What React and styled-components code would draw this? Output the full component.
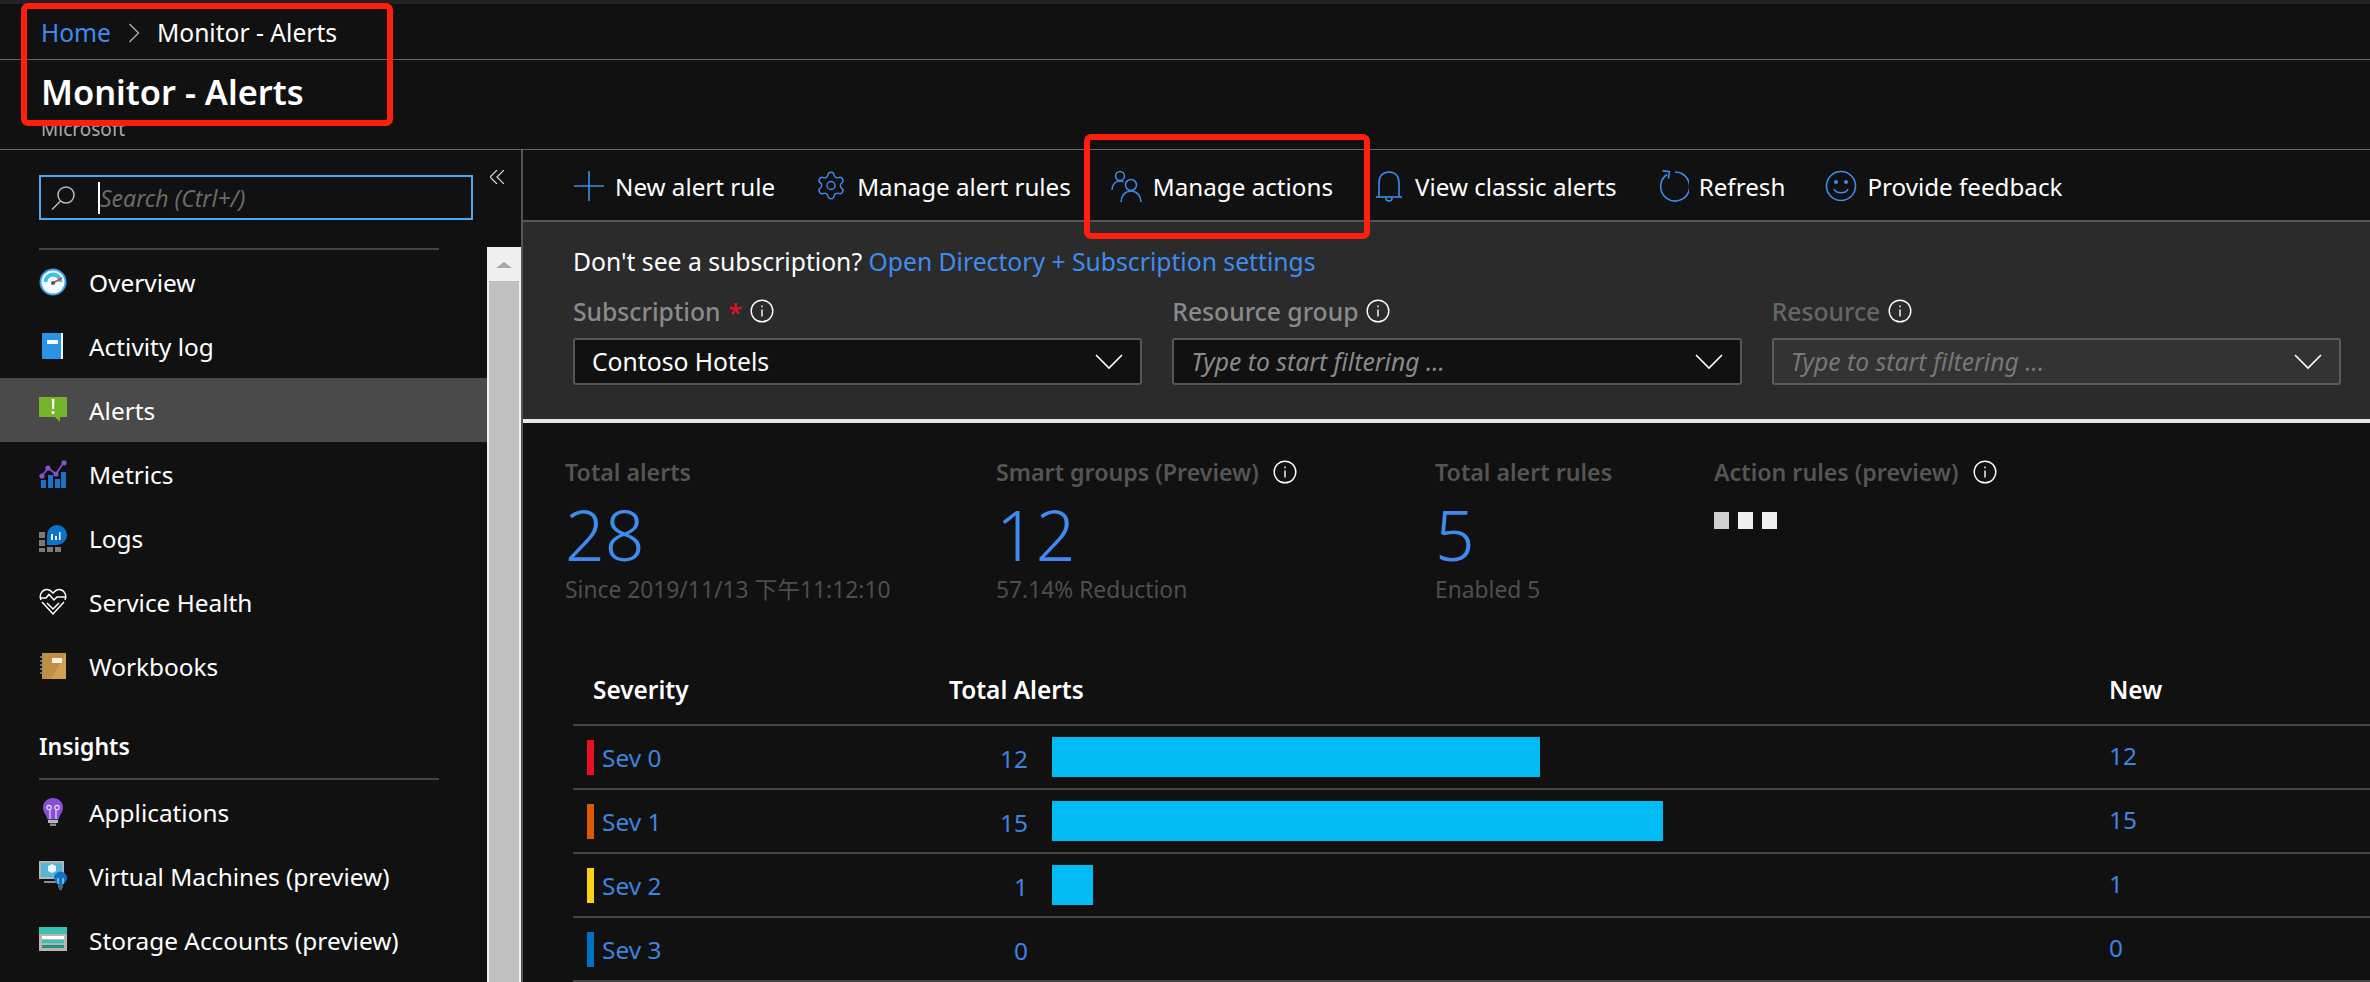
import styled, { createGlobalStyle } from 'styled-components';
import { Settings } from 'lucide-react';

const FONT = `"Noto Sans", "Noto Sans CJK SC", sans-serif`;

const navTop = ['Overview', 'Activity log', 'Alerts', 'Metrics', 'Logs', 'Service Health', 'Workbooks'];
const navInsights = ['Applications', 'Virtual Machines (preview)', 'Storage Accounts (preview)'];

const severities = [
  { name: 'Sev 0', color: '#e81123', total: 12, isNew: 12 },
  { name: 'Sev 1', color: '#da5b00', total: 15, isNew: 15 },
  { name: 'Sev 2', color: '#fcd116', total: 1, isNew: 1 },
  { name: 'Sev 3', color: '#0072c6', total: 0, isNew: 0 },
];

function OverviewIcon() {
  return (
    <svg width="28" height="28" viewBox="0 0 28 28">
      <circle cx="14" cy="14" r="13.5" fill="#3aa0e8" />
      <circle cx="14" cy="14" r="11.5" fill="#f4fbff" />
      <path d="M4.5 14a9.5 9.5 0 0 1 19 0h-4a5.5 5.5 0 0 0-11 0z" fill="#35c3e8" />
      <path d="M14 15l9-5" stroke="#e0393e" strokeWidth="1.6" />
      <circle cx="14" cy="15" r="2" fill="#555" />
    </svg>
  );
}

function BookIcon() {
  return (
    <svg width="28" height="28" viewBox="0 0 28 28">
      <path d="M5 1h19v26H5z" fill="#f4fbff" />
      <path d="M3 2a1 1 0 0 1 1-1h18v26H4a1 1 0 0 1-1-1z" fill="#2a93e6" />
      <path d="M8 8h11v4H8z" fill="#fff" />
    </svg>
  );
}

function AlertIcon() {
  return (
    <svg width="28" height="28" viewBox="0 0 28 28">
      <path d="M0 0h28v20h-7v5l-5-5H0z" transform="translate(0 1)" fill="#74b52a" />
      <path d="M12.8 3h2.6l-.4 10h-1.8z" fill="#fff" />
      <circle cx="14" cy="16.5" r="1.5" fill="#fff" />
    </svg>
  );
}

function MetricsIcon() {
  return (
    <svg width="28" height="28" viewBox="0 0 28 28">
      <path d="M2 21h5v8H2zM9 16h5v13H9zM16 20h5v9h-5zM22 13h5v16h-5z" fill="#1a73c7" transform="translate(0 -1)" />
      <path d="M3 16l6-8 8 6 8-12" fill="none" stroke="#8a4fd8" strokeWidth="1.6" />
      <circle cx="3" cy="16" r="2.6" fill="#8a4fd8" />
      <circle cx="9" cy="8" r="2.6" fill="#8a4fd8" />
      <circle cx="17" cy="14" r="2.6" fill="#8a4fd8" />
      <circle cx="25" cy="2.8" r="2.6" fill="#8a4fd8" />
    </svg>
  );
}

function LogsIcon() {
  return (
    <svg width="28" height="28" viewBox="0 0 28 28">
      <path d="M0 8h6v6H0zM0 16h6v6H0zM0 24h6v4H0zM8 23h6v5H8zM16 23h6v5h-6z" fill="#7a7a7a" />
      <path d="M8 11a10 10 0 1 1 10 10H8z" fill="#0f72c4" />
      <path d="M12 10h2v6h-2zM16 12h2v4h-2zM20 8h1.6v8H20z" fill="#e8f4ff" />
    </svg>
  );
}

function HeartIcon() {
  return (
    <svg width="28" height="28" viewBox="0 0 28 28" fill="none" stroke="#fff" strokeWidth="1.5">
      <path d="M2 12C-.5 6 4 1 8.500 1.500c2.500.2 4 1.800 5.500 3.500 1.500-1.700 3-3.300 5.500-3.500C24 1 28.500 6 26 12" />
      <path d="M1 10h6l3-3.500 5 5.500 3-3h9" />
      <path d="M3 14l11 12 11-12M8 15l6 6 6-6" />
    </svg>
  );
}

function WorkbookIcon() {
  return (
    <svg width="28" height="28" viewBox="0 0 28 28">
      <path d="M3 1h24v26H3z" fill="#c08f45" />
      <path d="M27 1v26H12z" fill="#d19e52" />
      <path d="M13 6h10v5H13z" fill="#f5f0e6" />
      <path d="M1 5h4M1 9h4M1 13h4M1 17h4M1 21h4" stroke="#8c8c8c" strokeWidth="1.3" />
    </svg>
  );
}

function BulbIcon() {
  return (
    <svg width="28" height="28" viewBox="0 0 28 28">
      <path d="M14 0c5.500 0 10 4 10 9.500 0 5-3.500 7-4.500 12h-11C7.500 16.500 4 14.500 4 9.500 4 4 8.500 0 14 0z" fill="#8a4fd8" />
      <path d="M9 22h10v3H9z" fill="#b5b5b5" />
      <path d="M11 25.500h6V28h-6z" fill="#888" />
      <path d="M11 21v-9M17 21v-9" stroke="#e8dcff" strokeWidth="1.2" />
      <circle cx="10" cy="9.500" r="2.200" fill="none" stroke="#e8dcff" strokeWidth="1.2" />
      <circle cx="18" cy="9.500" r="2.200" fill="none" stroke="#e8dcff" strokeWidth="1.2" />
    </svg>
  );
}

function VmIcon() {
  return (
    <svg width="28" height="30" viewBox="0 0 28 30">
      <path d="M0 0h25v18H0z" fill="#b5b5b5" />
      <path d="M2 2h21v14H2z" fill="#59b4d9" />
      <path d="M9 5l4-2 4 2v5l-4 2-4-2z" fill="#e8f7fd" />
      <path d="M5 20h15v2H5z" fill="#8f8f8f" />
      <circle cx="21.500" cy="17" r="6.500" fill="#0f72c4" />
      <path d="M19 21v4h5v-4z" fill="#0f72c4" />
      <path d="M19 17v6M24 17v6" stroke="#d9eeff" strokeWidth="1" />
      <path d="M19 26h5M20 28h3" stroke="#777" strokeWidth="1.4" />
    </svg>
  );
}

function StorageIcon() {
  return (
    <svg width="28" height="28" viewBox="0 0 28 28">
      <path d="M0 2h28v23H0z" fill="#b5b5b5" />
      <path d="M0 1h28v7H0z" fill="#37c2b1" />
      <path d="M3 10h22v3H3z" fill="#fff" />
      <path d="M3 14h22v3H3z" fill="#37c2b1" />
      <path d="M3 19h22v3H3z" fill="#268f84" />
    </svg>
  );
}

const navIcons = {
  Overview: OverviewIcon,
  'Activity log': BookIcon,
  Alerts: AlertIcon,
  Metrics: MetricsIcon,
  Logs: LogsIcon,
  'Service Health': HeartIcon,
  Workbooks: WorkbookIcon,
  Applications: BulbIcon,
  'Virtual Machines (preview)': VmIcon,
  'Storage Accounts (preview)': StorageIcon,
};

function PlusIcon() {
  return (
    <svg width="32" height="32" viewBox="0 0 32 32" stroke="#3f8cf0" strokeWidth="1.6">
      <path d="M16 1v30M1 16h30" />
    </svg>
  );
}

function PeopleIcon() {
  return (
    <svg width="32" height="32" viewBox="0 0 32 32" fill="none" stroke="#3f8cf0" strokeWidth="1.5">
      <circle cx="9" cy="6" r="4.500" />
      <path d="M1 20c0-5 3-9 8-9 1.500 0 2.500.3 3.500 1" />
      <circle cx="20" cy="15" r="5.500" />
      <path d="M10 32c0-6 4-11 10-11s10 5 10 11" />
    </svg>
  );
}

function BellIcon() {
  return (
    <svg width="32" height="32" viewBox="0 0 32 32" fill="none" stroke="#3f8cf0" strokeWidth="1.6">
      <path d="M6 26V13C6 6 10 2 16 2s10 4 10 11v13" />
      <path d="M3 27h26" />
      <path d="M13 28a3 3 0 0 0 6 0" />
    </svg>
  );
}

function RefreshIcon() {
  return (
    <svg width="32" height="32" viewBox="0 0 32 32" fill="none" stroke="#3f8cf0" strokeWidth="1.6">
      <path d="M10 4.500A14.500 14.500 0 1 0 18 2" />
      <path d="M5 1h7v7" transform="rotate(8 8 4)" />
    </svg>
  );
}

function SmileIcon() {
  return (
    <svg width="32" height="32" viewBox="0 0 32 32" fill="none" stroke="#3f8cf0" strokeWidth="1.6">
      <circle cx="16" cy="16" r="14.500" />
      <circle cx="11" cy="12" r="1.200" fill="#3f8cf0" />
      <circle cx="21" cy="12" r="1.200" fill="#3f8cf0" />
      <path d="M9 19c2 5 12 5 14 0" />
    </svg>
  );
}

function InfoIcon() {
  return (
    <svg width="24" height="24" viewBox="0 0 24 24" fill="none" stroke="#fff" strokeWidth="1.4">
      <circle cx="12" cy="12" r="10.800" />
      <path d="M12 10.500v7" />
      <path d="M12 6.500v1.800" />
    </svg>
  );
}

function Chevron() {
  return (
    <svg width="28" height="16" viewBox="0 0 28 16" fill="none" stroke="#fff" strokeWidth="1.6">
      <path d="M1 1l13 13L27 1" />
    </svg>
  );
}

const toolbarItems = [
  { label: 'New alert rule', Icon: PlusIcon },
  { label: 'Manage alert rules', Icon: () => <Settings size={37} strokeWidth={1.05} color="#3f8cf0" /> },
  { label: 'Manage actions', Icon: PeopleIcon },
  { label: 'View classic alerts', Icon: BellIcon },
  { label: 'Refresh', Icon: RefreshIcon },
  { label: 'Provide feedback', Icon: SmileIcon },
];

function NavItem({ label }) {
  const Icon = navIcons[label];
  return (
    <NavRow $active={label === 'Alerts'}>
      <NavIcon>
        <Icon />
      </NavIcon>
      <span>{label}</span>
    </NavRow>
  );
}

function Filter({ label, value, placeholder, required, disabled }) {
  return (
    <FilterField>
      <FilterLabel $disabled={disabled}>
        {label}
        {required && <Star>*</Star>}
        <InfoIcon />
      </FilterLabel>
      <Select $disabled={disabled}>
        {value ? <span>{value}</span> : <Placeholder $disabled={disabled}>{placeholder}</Placeholder>}
        <Chevron />
      </Select>
    </FilterField>
  );
}

function Stat({ label, value, note, info, width, children }) {
  return (
    <StatBlock $width={width}>
      <StatLabel>
        {label}
        {info && <InfoIcon />}
      </StatLabel>
      {value && <StatValue>{value}</StatValue>}
      {note && <StatNote>{note}</StatNote>}
      {children}
    </StatBlock>
  );
}

export default function App() {
  return (
    <Page>
      <GlobalStyle />
      <TopStrip />
      <Breadcrumb>
        <HomeLink>Home</HomeLink>
        <svg width="12" height="20" viewBox="0 0 12 20" fill="none" stroke="#aaa" strokeWidth="1.4">
          <path d="M1.500 1l9 9-9 9" />
        </svg>
        <span>Monitor - Alerts</span>
      </Breadcrumb>
      <TitleBlock>
        <Title>Monitor - Alerts</Title>
        <Owner>Microsoft</Owner>
      </TitleBlock>

      <Body>
        <Sidebar>
          <Nav>
            <SearchBox>
              <svg width="24" height="24" viewBox="0 0 24 24" fill="none" stroke="#bbb" strokeWidth="1.5">
                <circle cx="15" cy="9" r="8" />
                <path d="M9.500 15L1 23.500" />
              </svg>
              <Caret />
              <SearchHint>Search (Ctrl+/)</SearchHint>
            </SearchBox>
            <Rule $top={28} />
            {navTop.map((label) => (
              <NavItem key={label} label={label} />
            ))}
            <SectionTitle>Insights</SectionTitle>
            <Rule />
            {navInsights.map((label) => (
              <NavItem key={label} label={label} />
            ))}
          </Nav>
          <Rail>
            <Collapse>
              <svg width="14" height="14" viewBox="0 0 14 14" fill="none" stroke="#ddd" strokeWidth="1.2">
                <path d="M7 0L0 7l7 7M14 0L7 7l7 7" />
              </svg>
            </Collapse>
            <Track>
              <TrackArrow />
              <Thumb />
            </Track>
          </Rail>
        </Sidebar>

        <Main>
          <Toolbar>
            {toolbarItems.map(({ label, Icon }) => (
              <ToolButton key={label}>
                <ToolIcon>
                  <Icon />
                </ToolIcon>
                {label}
              </ToolButton>
            ))}
          </Toolbar>

          <FilterPanel>
            <Notice>
              Don't see a subscription? <BlueLink>Open Directory + Subscription settings</BlueLink>
            </Notice>
            <FilterRow>
              <Filter label="Subscription" required value="Contoso Hotels" />
              <Filter label="Resource group" placeholder="Type to start filtering ..." />
              <Filter label="Resource" disabled placeholder="Type to start filtering ..." />
            </FilterRow>
          </FilterPanel>

          <Stats>
            <Stat label="Total alerts" value="28" note="Since 2019/11/13 下午11:12:10" width={431} />
            <Stat label="Smart groups (Preview)" value="12" note="57.14% Reduction" info width={439} />
            <Stat label="Total alert rules" value="5" note="Enabled 5" width={279} />
            <Stat label="Action rules (preview)" info>
              <Dots>
                <Dot $shade="#d0d0d0" />
                <Dot />
                <Dot />
              </Dots>
            </Stat>
          </Stats>

          <Table>
            <HeadRow>
              <HeadCell $pad={20}>Severity</HeadCell>
              <HeadCell>Total Alerts</HeadCell>
              <HeadCell>New</HeadCell>
            </HeadRow>
            {severities.map((sev) => (
              <Row key={sev.name}>
                <SevCell>
                  <SevMark $color={sev.color} />
                  <SevName>{sev.name}</SevName>
                </SevCell>
                <TotalCell>
                  <Count>{sev.total}</Count>
                  {sev.total > 0 && <Bar style={{ width: sev.total * 40.7 }} />}
                </TotalCell>
                <NewCell>{sev.isNew}</NewCell>
              </Row>
            ))}
          </Table>
        </Main>
      </Body>

      <Callout $left={21} $top={3} $width={372} $height={123} />
      <Callout $left={1084} $top={134} $width={286} $height={105} />
    </Page>
  );
}

const GlobalStyle = createGlobalStyle`
  html, body {
    margin: 0;
    padding: 0;
    background: #111;
  }
`;

const Page = styled.div`
  position: relative;
  width: 2370px;
  height: 982px;
  overflow: hidden;
  background: #111;
  color: #fff;
  font-family: ${FONT};
  font-size: 24.4px;
`;

const TopStrip = styled.div`
  height: 4px;
  background: #222;
`;

const Breadcrumb = styled.div`
  height: 53px;
  padding: 2px 0 0 41px;
  display: flex;
  align-items: center;
  gap: 17px;
  border-bottom: 1px solid #666;
  font-size: 24.6px;
`;

const HomeLink = styled.span`
  color: #3f8cf0;
`;

const TitleBlock = styled.div`
  height: 89px;
  padding-left: 41px;
  border-bottom: 1px solid #666;
  overflow: hidden;
`;

const Title = styled.div`
  height: 61px;
  line-height: 64px;
  font-size: 34.4px;
  font-weight: 600;
`;

const Owner = styled.div`
  font-size: 19px;
  line-height: 16px;
  color: #aaa;
`;

const Body = styled.div`
  display: flex;
  height: 832px;
`;

const Sidebar = styled.aside`
  width: 521px;
  display: flex;
  flex: none;
  border-right: 2px solid #555;
`;

const Nav = styled.nav`
  width: 487px;
  padding-top: 25px;
`;

const SearchBox = styled.div`
  box-sizing: border-box;
  width: 434px;
  height: 45px;
  margin-left: 39px;
  display: flex;
  align-items: center;
  padding-left: 10px;
  border: 2px solid #4aa8f5;
`;

const Caret = styled.div`
  width: 2px;
  height: 32px;
  margin-left: 23px;
  background: #fff;
`;

const SearchHint = styled.span`
  font-style: italic;
  color: #6a6a6a;
  font-size: 23px;
`;

const Rule = styled.div`
  width: 400px;
  height: 2px;
  margin: ${(p) => p.$top || 0}px 0 0 39px;
  background: #444;
`;

const NavRow = styled.div`
  height: 64px;
  display: flex;
  align-items: center;
  padding-left: 39px;
  background: ${(p) => (p.$active ? '#4a4a4a' : 'transparent')};
`;

const NavIcon = styled.div`
  width: 28px;
  height: 30px;
  margin-right: 22px;
  display: flex;
  align-items: center;
  justify-content: center;
`;

const SectionTitle = styled.div`
  height: 80px;
  padding: 32px 0 0 39px;
  box-sizing: border-box;
  font-size: 23px;
  font-weight: 600;
`;

const Rail = styled.div`
  width: 34px;
  display: flex;
  flex-direction: column;
`;

const Collapse = styled.div`
  height: 97px;
  padding: 20px 0 0 3px;
  box-sizing: border-box;

  svg {
    display: block;
  }
`;

const Track = styled.div`
  flex: 1;
  background: #f0f0f0;
  display: flex;
  flex-direction: column;
  align-items: center;
`;

const TrackArrow = styled.div`
  margin: 15px 0 13px;
  border-left: 8px solid transparent;
  border-right: 8px solid transparent;
  border-bottom: 6px solid #a6a6a6;
`;

const Thumb = styled.div`
  width: 30px;
  flex: 1;
  background: #c0c0c0;
`;

const Main = styled.main`
  flex: 1;
  min-width: 0;
`;

const Toolbar = styled.div`
  height: 67px;
  display: flex;
  align-items: center;
  gap: 40px;
  padding: 3px 0 0 50px;
  border-bottom: 2px solid #555;
  font-size: 24.2px;
`;

const ToolButton = styled.div`
  display: flex;
  align-items: center;
  gap: 10px;
  white-space: nowrap;
`;

const ToolIcon = styled.div`
  width: 32px;
  height: 34px;
  margin-top: -2px;
  display: flex;
  align-items: center;
  justify-content: center;
`;

const FilterPanel = styled.section`
  box-sizing: border-box;
  height: 201px;
  padding: 22px 29px 0 50px;
  background: #2b2b2b;
  border-bottom: 4px solid #e6e6e6;
  font-size: 24.7px;
`;

const Notice = styled.div`
  height: 40px;
  line-height: 36px;
`;

const BlueLink = styled.span`
  color: #3f8cf0;
`;

const FilterRow = styled.div`
  display: grid;
  grid-template-columns: repeat(3, 1fr);
  column-gap: 30px;
  margin-top: 9px;
`;

const FilterField = styled.div`
  min-width: 0;
`;

const FilterLabel = styled.div`
  height: 36px;
  display: flex;
  align-items: center;
  gap: 8px;
  font-weight: 500;
  color: ${(p) => (p.$disabled ? '#666' : '#8a8a8a')};
`;

const Star = styled.span`
  color: #e81123;
  line-height: 1;
  height: 20px;
`;

const Select = styled.div`
  box-sizing: border-box;
  height: 47px;
  margin-top: 9px;
  display: flex;
  align-items: center;
  justify-content: space-between;
  padding: 0 17px;
  border: 2px solid ${(p) => (p.$disabled ? '#5c5c5c' : '#555')};
  border-radius: 3px;
  background: ${(p) => (p.$disabled ? '#333' : '#111')};
`;

const Placeholder = styled.span`
  font-style: italic;
  color: ${(p) => (p.$disabled ? '#777' : '#8a8a8a')};
`;

const Stats = styled.section`
  height: 239px;
  display: flex;
  padding: 33px 0 0 42px;
  box-sizing: border-box;
`;

const StatBlock = styled.div`
  width: ${(p) => (p.$width ? `${p.$width}px` : 'auto')};
`;

const StatLabel = styled.div`
  height: 32px;
  display: flex;
  align-items: center;
  gap: 14px;
  font-size: 23.2px;
  font-weight: 600;
  color: #555;
`;

const StatValue = styled.div`
  height: 87px;
  line-height: 92px;
  font-size: 69.5px;
  font-weight: 300;
  color: #3f8cf0;
`;

const StatNote = styled.div`
  font-size: 22.8px;
  line-height: 30px;
  color: #4e4e4e;
`;

const Dots = styled.div`
  display: flex;
  gap: 9px;
  margin-top: 24px;
`;

const Dot = styled.div`
  width: 15px;
  height: 17px;
  background: ${(p) => p.$shade || '#f0f0f0'};
`;

const Table = styled.section`
  margin-left: 50px;
`;

const gridColumns = `
  display: grid;
  grid-template-columns: 376px 1160px 1fr;
`;

const HeadRow = styled.div`
  ${gridColumns}
  height: 64px;
  padding-bottom: 8px;
  align-items: center;
  border-bottom: 2px solid #444;
  font-weight: 600;
  box-sizing: border-box;
`;

const HeadCell = styled.div`
  padding-left: ${(p) => p.$pad || 0}px;
`;

const Row = styled.div`
  ${gridColumns}
  height: 64px;
  box-sizing: border-box;
  align-items: center;
  border-bottom: 2px solid #444;
  color: #3f84e0;
`;

const SevCell = styled.div`
  display: flex;
  align-items: center;
  gap: 8px;
  padding-left: 14px;
`;

const SevName = styled.span`
  margin-top: 1px;
`;

const SevMark = styled.span`
  width: 7px;
  height: 35px;
  background: ${(p) => p.$color};
`;

const TotalCell = styled.div`
  display: flex;
  align-items: center;
  gap: 24px;
`;

const Count = styled.span`
  width: 79px;
  margin-top: 3px;
  text-align: right;
`;

const Bar = styled.div`
  height: 40px;
  background: #00bcf2;
`;

const NewCell = styled.div`
  margin-top: -4px;
`;

const Callout = styled.div`
  position: absolute;
  box-sizing: border-box;
  left: ${(p) => p.$left}px;
  top: ${(p) => p.$top}px;
  width: ${(p) => p.$width}px;
  height: ${(p) => p.$height}px;
  border: 6px solid #ff1f0f;
  border-radius: 7px;
`;
